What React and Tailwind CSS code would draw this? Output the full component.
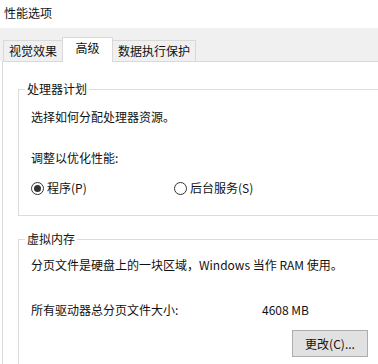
const font = { fontFamily: '"Noto Sans CJK SC", "Liberation Sans", sans-serif' };

function Tab({ label, active }) {
  if (active) {
    return (
      <div className="relative z-10 -mb-px flex h-[25px] w-[51px] items-start justify-center border border-b-0 border-[#d9d9d9] bg-white pt-[2px] -mx-px">
        {label}
      </div>
    );
  }
  return (
    <div className="flex h-[21px] items-center border border-b-0 border-[#d9d9d9] bg-[#f0f0f0] px-[5px]">
      {label}
    </div>
  );
}

function Radio({ checked, label, className = '' }) {
  return (
    <div className={`flex items-center gap-[3px] ${className}`}>
      <span className="flex h-[13px] w-[13px] items-center justify-center rounded-full border border-[#333] bg-white">
        {checked && <span className="h-[7px] w-[7px] rounded-full bg-[#333]" />}
      </span>
      <span>{label}</span>
    </div>
  );
}

function GroupBox({ title, className = '', children }) {
  return (
    <fieldset className={`w-[400px] border border-[#dcdcdc] pl-[12px] ${className}`}>
      <legend className="-ml-[6px] px-[2px] leading-[16px]">{title}</legend>
      {children}
    </fieldset>
  );
}

export default function App() {
  return (
    <div className="h-[364px] w-[378px] overflow-hidden bg-white text-[12px] leading-[16px] text-[#111]" style={font}>
      <div className="h-[28px] pl-[4px] pt-[5px]">性能选项</div>
      <div className="flex h-[33px] items-end bg-[#f0f0f0] pl-[3px]">
        <Tab label="视觉效果" />
        <Tab label="高级" active />
        <Tab label="数据执行保护" />
      </div>
      <div className="ml-[2px] h-[303px] border-l border-t border-[#d9d9d9] bg-white pl-[15px] pt-[19px]">
        <GroupBox title="处理器计划" className="pb-[19px]">
          <p className="mt-[12px]">选择如何分配处理器资源。</p>
          <p className="mt-[25px]">调整以优化性能:</p>
          <div className="mt-[14px] flex items-center">
            <Radio checked label="程序(P)" className="w-[143px]" />
            <Radio label="后台服务(S)" />
          </div>
        </GroupBox>
        <GroupBox title="虚拟内存" className="mt-[15px] h-[200px]">
          <p className="mt-[10px]">分页文件是硬盘上的一块区域，Windows 当作 RAM 使用。</p>
          <div className="mt-[29px] flex">
            <span className="w-[231px]">所有驱动器总分页文件大小:</span>
            <span>4608 MB</span>
          </div>
          <div className="mt-[12px] flex w-[337px] justify-end">
            <button type="button" className="h-[27px] w-[76px] border border-[#adadad] bg-[#e1e1e1] text-[12px]">
              更改(C)...
            </button>
          </div>
        </GroupBox>
      </div>
    </div>
  );
}
